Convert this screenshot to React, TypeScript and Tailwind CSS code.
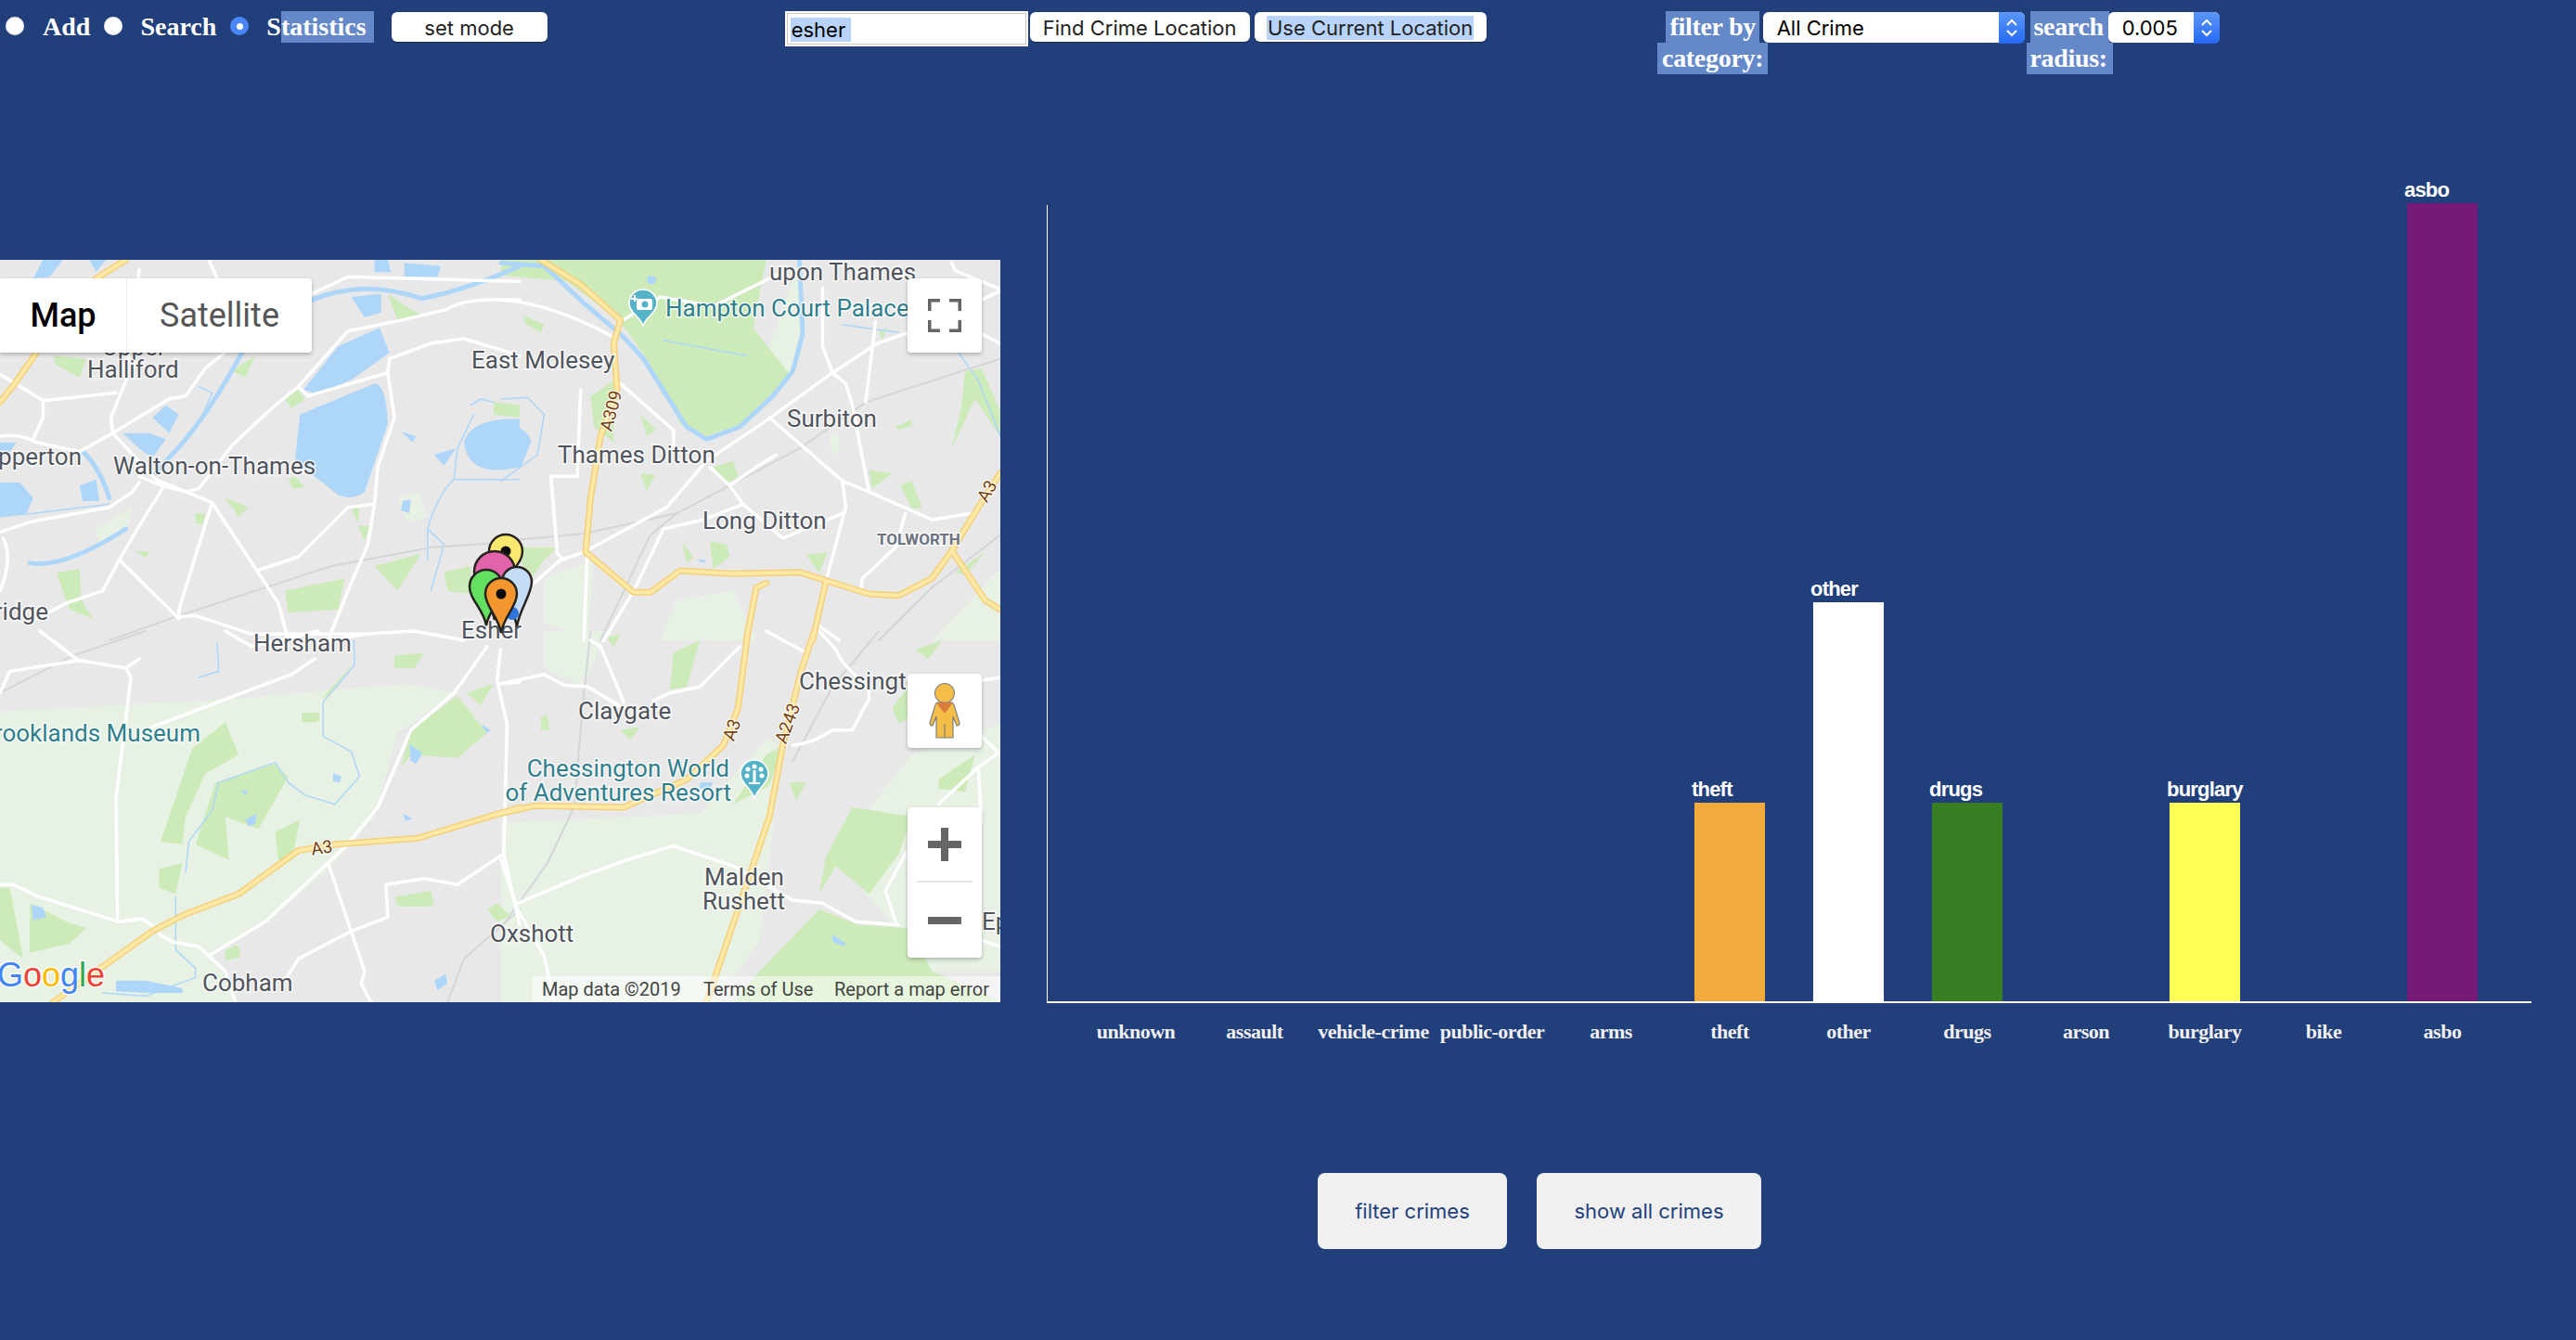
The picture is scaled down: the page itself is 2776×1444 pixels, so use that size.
import React from "react";

const Q: [number, number][] = [[0, -10], [540, -10], [0, 400], [540, 400]];

type Layer = [string[], string[], string[], string[]];

const lightGreen: Layer = [
  ["M290,900 L400,830 L380,900 L300,960Z", "M1200,800 L1260,780 L1290,860 L1230,880Z"],
  ["M130,1060 L280,1000 L260,1260 L130,1200Z", "M530,1130 L700,1100 L770,1260 L480,1260Z", "M1300,1260 L1506,1030 L1506,1260Z", "M990,590 L1020,590 L1020,660 L995,650Z", "M750,480 L830,250 L900,30 L905,300 L860,420Z"],
  ["M0,260 L360,240 L700,220 L900,200 L1230,170 L1370,200 L1200,330 L1130,600 L1000,760 L800,950 L640,1040 L720,1200 L0,1200Z"],
  ["M0,620 L600,590 L800,350 L850,370 L780,1000 L650,1200 L0,1200Z", "M1000,720 L1240,400 L1506,300 L1506,1100 L1300,1100Z", "M130,0 L320,0 L250,180 L130,120Z"],
];
const green: Layer = [
  ["M700,830 L680,800 L750,830 L720,860Z", "M860,1100 L1040,1060 L1020,1160 L870,1170Z", "M1130,1020 L1270,980 L1200,1100Z", "M170,1040 L240,1030 L245,1130 L280,1190 L210,1160Z", "M1340,1040 L1420,1020 L1420,1110 L1350,1100Z", "M700,390 L770,340 L740,410Z", "M860,480 L900,450 L920,480 L880,510Z", "M160,340 L260,350 L240,410 L170,370Z", "M590,850 L620,850 L610,885 L590,880Z", "M410,970 L450,975 L440,995Z", "M1170,140 L1240,190 L1280,210 L1200,225Z", "M1490,490 L1568,500 L1568,540 L1490,530Z", "M870,740 L890,730 L920,765 L885,770Z", "M1060,830 L1085,835 L1080,880Z", "M1080,890 L1115,890 L1100,940Z"],
  ["M0,30 L800,30 L760,250 L870,400 L730,560 L620,600 L540,560 L500,460 L440,350 L360,230 L200,100L0,80Z", "M270,470 L340,420 L340,620 L280,570Z", "M420,530 L470,580 L440,600Z", "M420,720 L465,725 L440,780Z", "M640,700 L700,680 L715,730 L680,755Z", "M1110,710 L1180,720 L1120,770Z", "M1205,760 L1240,745 L1270,830 L1240,835Z", "M1190,570 L1240,545 L1240,565 L1200,580Z", "M1400,390 L1450,380 L1506,520 L1506,600 L1430,480 L1360,640 L1390,500Z", "M545,940 L580,990 L560,1010Z", "M630,940 L680,950 L690,990 L640,1030Z", "M920,985 L985,975 L960,1040Z", "M1370,1040 L1460,975 L1400,1050Z", "M50,960 L170,960 L130,1000 L80,1080Z", "M70,210 L130,240 L120,265 L70,235Z", "M1140,260 L1165,250 L1150,290Z"],
  ["M580,380 L680,295 L720,400 L620,460 L560,600 L550,690 L485,680Z", "M650,490 L830,430 L870,470 L780,640 L680,600 L690,740 L590,690Z", "M830,650 L905,610 L880,740 L840,740Z", "M90,880 L200,940 L260,960 L210,1010 L90,1040Z", "M1240,320 L1380,210 L1470,330 L1380,410 L1240,400 L1210,440Z", "M970,220 L1070,100 L1000,200Z", "M480,770 L550,750 L530,850 L480,830Z", "M1190,860 L1300,840 L1310,890 L1200,890Z", "M1470,900 L1500,880 L1540,920 L1500,940Z", "M1190,80 L1280,70 L1250,120 L1190,120Z", "M1410,200 L1490,170 L1450,240Z", "M0,830 L30,830 L70,1060 L0,1000Z", "M910,265 L965,265 L960,295 L910,295Z", "M680,1030 L720,1015 L725,1055 L680,1065Z"],
  ["M960,850 L980,730 L1060,570 L1240,600 L1200,720 L1110,850 L1010,760Z", "M780,1100 L960,900 L1080,950 L1230,960 L1300,1100 L1506,1200 L700,1200Z", "M120,280 L140,270 L145,320 L120,320Z", "M360,320 L420,310 L390,350Z", "M870,490 L920,490 L890,550Z", "M700,560 L800,400 L850,370 L810,500Z", "M520,70 L600,30 L560,180 L510,190Z", "M320,20 L360,10 L340,55Z", "M1180,250 L1250,150 L1300,230 L1200,300Z", "M1320,480 L1430,400 L1400,520 L1320,510Z", "M1250,60 L1330,30 L1290,90Z"],
];
const water: Layer = [
  ["M905,530 L1130,430 Q1165,430 1170,560 L1100,780 Q1060,810 1020,790 L890,680Z", "M915,450 L1020,310 L1145,250 L1175,330 L1065,415 L960,465Z", "M1400,620 Q1420,540 1568,545 L1568,700 L1500,710 Q1410,710 1400,620Z", "M460,540 L500,500 L540,530 L510,590Z", "M370,590 L450,590 L500,610 L460,670 L420,640Z", "M0,750 L60,750 L100,800 L80,850 L0,860Z", "M240,760 L290,740 L300,810 L250,810Z", "M1310,660 L1375,640 L1340,695Z", "M130,30 L190,30 L150,85 L100,90Z", "M1060,150 L1150,140 L1150,200 L1100,215Z", "M1130,30 L1170,30 L1180,70 L1130,70Z", "M270,30 L320,30 L290,70Z", "M1220,40 L1330,50 L1320,85 L1220,85Z", "M0,620 L50,620 L30,650 L0,650Z", "M1210,585 L1255,600 L1245,620Z", "M1215,810 L1240,805 L1235,850 L1210,840Z"],
  ["M0,545 Q90,580 90,620 L60,700 L0,710Z", "M440,95 a14,14 0 1 0 28,0 a14,14 0 1 0 -28,0Z", "M590,1000 L620,1000 L610,1010Z"],
  ["M95,885 L130,895 L140,925 L100,935Z", "M1235,365 L1275,395 L1255,430 L1240,420Z", "M1005,460 L1030,470 L1025,490 L1005,485Z", "M740,610 L775,590 L770,625 L750,630Z", "M725,515 L748,515 L740,532Z", "M1215,590 L1245,605 L1225,615Z", "M1450,300 L1480,320 L1470,330Z", "M1310,1130 L1345,1110 L1350,1140 L1320,1160Z", "M350,1130 L440,1130 L550,1155 L550,1170 L440,1170 L350,1165Z"],
  ["M600,490 L640,490 L630,510 L600,510Z", "M1000,980 L1040,1010 L1035,1020 L1000,1005Z"],
];
const river: Layer = [
  ["M940,160 Q1100,90 1270,155 Q1400,130 1568,50", "M730,330 Q620,550 510,670 L470,720", "M250,650 Q300,700 330,800", "M90,1010 Q190,1030 380,900"],
  ["M0,40 L130,50 L250,170 L370,280 L430,350 L500,470 L560,570 L620,610 L720,570 L820,470 L880,390 L910,270 L900,30"],
  [],
  [],
];
const thinRiver: Layer = [
  ["M1290,1000 L1290,900 Q1320,790 1370,740 L1568,740", "M1420,500 L1450,480 L1490,490", "M1430,530 L1380,640 L1370,740", "M1290,900 L1340,950 L1300,1100", "M0,860 L100,850 L330,820", "M600,440 L640,460 L600,560"],
  ["M490,290 L740,340", "M0,480 L80,475 L130,530 L110,660 L0,745", "M1030,240 L1200,265", "M1380,330 L1440,420 L1506,600"],
  ["M1068,30 L1070,110 L975,230 L975,340 L1060,390 L1085,470 L1010,560 L920,530 L870,490 L830,425 L660,490 L640,580 L570,680 L560,780", "M530,860 L530,1030 L590,1090 L590,1120 L440,1180 L310,1170", "M600,150 L660,130 L655,40"],
  [],
];
const rail: Layer = [
  ["M330,1260 L540,1180 L1000,1020 L1300,960 L1568,940"],
  ["M0,940 L250,915 L530,850 L900,640 L1100,490 L1506,350", "M530,850 L450,920 L300,1260", "M1140,1260 L1300,1090 L1506,920"],
  ["M0,200 L220,80 L440,0", "M1350,1200 L1400,1060 L1568,900"],
  ["M270,0 L250,200 L220,570 L140,750 L0,960", "M1140,0 L1000,180 L880,420"],
];
const roads: Layer = [
  ["M0,400 L130,485 L350,460", "M130,485 L130,540 L100,610", "M420,60 L380,420 L335,540 L340,590 L470,740 L640,815 L840,1140 L870,1260", "M0,600 Q60,590 110,620 L240,650 L340,590 L510,480 L560,470 L620,380 L690,320", "M1568,160 Q1400,150 1350,190 Q1200,230 1050,260 L900,440 L820,510 L700,630 L600,770 L560,780 L490,760 L420,730", "M900,440 L930,470 L1170,395 L1175,350 L1300,300 L1400,285 L1568,340", "M1170,395 L1190,540 L1140,700 L1130,820 L1110,950 L1050,1100 L990,1260", "M640,815 L540,1160 L540,1190 L360,1000 L310,1100 L200,1140 L110,1190", "M0,910 L100,875 L330,830 L400,780 L420,750", "M775,1035 L900,990 L1050,830 L1130,820", "M0,1100 Q40,1000 10,930", "M360,1000 L420,890 L490,770", "M540,1185 L590,1180 L760,1240 L1100,1240", "M940,140 L1050,85 L1568,100", "M630,30 L655,90", "M1000,1260 L1100,1240 L1250,1230 L1400,1260"],
  ["M0,160 Q150,170 340,280", "M360,230 L480,150 L640,180 L830,80", "M250,975 L500,830 L620,680 L800,550 L1000,395 L1135,300 L1300,240 L1506,130", "M810,540 L1030,745 L1110,780 L1300,870 L1420,850", "M1030,745 L1040,830 L980,1070", "M1000,395 L970,310 L970,120", "M1000,395 L1040,430 L1060,500 L1110,780", "M1130,230 L1100,490", "M360,430 L520,580 L520,630", "M630,700 L690,760 L730,820 L610,870 L490,900 L400,1100 L310,1260", "M690,760 L770,700 L830,660", "M730,820 L850,930 L1030,850", "M150,730 L170,980 L190,1000", "M150,730 L230,730 L240,450", "M250,975 L180,1000 L50,1120", "M260,975 L250,1260", "M1220,850 L1190,960 L1090,1060 L1085,1100", "M1360,40 L1370,65 L1506,125", "M1450,270 L1506,300", "M955,1210 L1020,1260"],
  ["M0,200 L30,130 L240,95 L380,120 L420,90", "M380,120 L395,150 L350,540 L355,940", "M460,310 L880,140 L950,90", "M0,820 L40,820 L120,860 L360,940 L430,930 L470,960", "M480,980 L520,1005 L600,1020 L680,1100 L710,1200", "M630,1050 L800,940 L1040,700 L1140,570 L1240,320 L1370,200 L1470,50", "M990,750 L1100,1100 L1090,1140 L1120,1200", "M860,1130 L900,1060 L1060,970 L1170,925 L1165,820 L1280,800 L1380,820 L1520,720 L1530,300 L1500,160 L1510,60", "M1520,720 L1568,950", "M120,0 L230,90", "M1510,170 L1568,165", "M680,0 L760,50 L960,0"],
  ["M0,170 L130,140 L190,175 L260,180 L370,250", "M300,50 L370,230", "M270,30 L300,50", "M460,225 L510,200 L600,180 L720,50", "M880,370 Q950,360 1000,320 L1060,320 L1110,220 L1110,190 L1030,100 L1010,60 L960,0", "M1450,340 L1506,400", "M1320,560 L1440,440 L1506,390", "M1440,440 L1450,620", "M50,880 L250,790 L380,740 L520,695 L700,760 L880,870 L970,880 L1070,940 L1200,950", "M1160,840 L1190,940", "M1160,840 L1220,720", "M0,740 L50,900 L130,1050 L160,1200", "M1450,1000 L1506,1020", "M800,0 L920,70", "M1506,150 L1450,160 L1400,250"],
];
const highways: Layer = [
  ["M0,490 L45,430 L110,330", "M290,90 L380,30"],
  ["M120,30 L240,110 L360,225 L340,300 L350,450 L300,600 L270,800 L255,975 L400,1105 L450,1105 L540,1035 L700,1045 L900,1040 L1110,1110 L1200,1115 L1300,1060 L1360,970 L1440,830 L1506,720", "M1360,970 L1460,1130 L1506,1160", "M740,1260 L770,1090 L800,1075", "M940,1260 L980,1070"],
  ["M160,1200 L460,970 L560,915 L720,850 L900,710 L1010,690 L1260,670 L1568,570"],
  ["M745,0 L715,250 L670,370 L560,480 L370,570 L100,565 L0,590", "M945,0 L905,130 L850,370 L810,600 L620,1200"],
];

function fills(layer: Layer, color: string) {
  return layer.map((ds, i) => (
    <g key={i} transform={`translate(${Q[i][0]},${Q[i][1]}) scale(0.35714,0.33333)`} fill={color}>
      {ds.map((d, j) => <path key={j} d={d} />)}
    </g>
  ));
}
function lines(layer: Layer, color: string, w: number) {
  return layer.map((ds, i) => (
    <g key={i} transform={`translate(${Q[i][0]},${Q[i][1]}) scale(0.35714,0.33333)`} fill="none" stroke={color} strokeWidth={w} strokeLinejoin="round" strokeLinecap="round">
      {ds.map((d, j) => <path key={j} d={d} vectorEffect="non-scaling-stroke" />)}
    </g>
  ));
}

function Place({ x, y, t, anchor, teal }: { x: number; y: number; t: string; anchor?: "end"; teal?: boolean }) {
  return (
    <text x={x} y={y} textAnchor={anchor} fontSize={26} fill={teal ? "#2f7f8d" : "#50545c"} stroke="#ffffff" strokeOpacity={0.75} strokeWidth={3} className="font-['Roboto',sans-serif] [paint-order:stroke]">
      {t}
    </text>
  );
}
function RoadLabel({ x, y, r, t }: { x: number; y: number; r: number; t: string }) {
  return (
    <text transform={`translate(${x},${y}) rotate(${r})`} textAnchor="middle" dominantBaseline="middle" fontSize={19} fill="#75400c" stroke="#ffffff" strokeOpacity={0.8} strokeWidth={2.5} className="font-['Roboto',sans-serif] [paint-order:stroke]">
      {t}
    </text>
  );
}
function Pin({ cx, cy, r, tip, fill, dot }: { cx: number; cy: number; r: number; tip: number; fill: string; dot?: boolean }) {
  const d = `M${cx},${tip} C${cx - 3},${tip - 18} ${cx - r},${cy + r * 0.8} ${cx - r},${cy} A${r},${r} 0 1 1 ${cx + r},${cy} C${cx + r},${cy + r * 0.8} ${cx + 3},${tip - 18} ${cx},${tip}Z`;
  return (
    <g>
      <path d={d} fill={fill} stroke="#26231f" strokeWidth={2.5} />
      {dot && <circle cx={cx} cy={cy} r={5.5} fill="#0b0b0b" />}
    </g>
  );
}
function Poi({ cx, cy, tip }: { cx: number; cy: number; tip: number }) {
  return <path d={`M${cx},${tip} C${cx - 3},${tip - 10} ${cx - 15},${cy + 10} ${cx - 15},${cy} A15,15 0 1 1 ${cx + 15},${cy} C${cx + 15},${cy + 10} ${cx + 3},${tip - 10} ${cx},${tip}Z`} fill="#54b3c7" stroke="#ffffff" strokeWidth={1.5} />;
}

function MapView() {
  return (
    <div className="relative mt-[59px] h-[800px] w-[1078px] shrink-0 overflow-hidden bg-[#e8e8e8]">
      <svg width="1078" height="800" viewBox="0 0 1078 800" className="block">
        {fills(lightGreen, "#e7f2e5")}
        {fills(green, "#cdeab9")}
        {fills(water, "#aed6f8")}
        {lines(thinRiver, "#aed6f8", 1.5)}
        {lines(river, "#aed6f8", 5)}
        {lines(rail, "#d3d6d9", 2)}
        {lines(roads, "#ffffff", 3.5)}
        {lines(highways, "#f5cf7a", 7)}
        {lines(highways, "#fde9a6", 4)}

        <Place x={829} y={22} t="upon Thames" />
        <Place x={717} y={61} t="Hampton Court Palace" teal />
        <Place x={508} y={117} t="East Molesey" />
        <Place x={110} y={103} t="Upper" />
        <Place x={94} y={127} t="Halliford" />
        <Place x={88} y={221} t="Shepperton" anchor="end" />
        <Place x={122} y={231} t="Walton-on-Thames" />
        <Place x={52} y={388} t="Weybridge" anchor="end" />
        <Place x={848} y={180} t="Surbiton" />
        <Place x={601} y={219} t="Thames Ditton" />
        <Place x={757} y={290} t="Long Ditton" />
        <text x={945} y={307} fontSize={17} fontWeight={700} fill="#6b7480" stroke="#ffffff" strokeOpacity={0.75} strokeWidth={3} className="font-['Roboto',sans-serif] [paint-order:stroke]">TOLWORTH</text>
        <Place x={273} y={422} t="Hersham" />
        <Place x={216} y={519} t="Brooklands Museum" anchor="end" teal />
        <Place x={623} y={495} t="Claygate" />
        <Place x={861} y={463} t="Chessington" />
        <Place x={786} y={557} t="Chessington World" anchor="end" teal />
        <Place x={788} y={583} t="of Adventures Resort" anchor="end" teal />
        <Place x={759} y={674} t="Malden" />
        <Place x={757} y={700} t="Rushett" />
        <Place x={528} y={735} t="Oxshott" />
        <Place x={218} y={788} t="Cobham" />
        <Place x={1058} y={722} t="Epsom" />
        <Place x={497} y={408} t="Esher" />

        <RoadLabel x={660} y={163} r={-75} t="A309" />
        <RoadLabel x={1065} y={250} r={-60} t="A3" />
        <RoadLabel x={347} y={635} r={-8} t="A3" />
        <RoadLabel x={790} y={507} r={-70} t="A3" />
        <RoadLabel x={850} y={500} r={-70} t="A243" />

        <Poi cx={693} cy={47} tip={71} />
        <g fill="#ffffff">
          <rect x={686} y={42} width={17} height={12} rx={2} />
          <rect x={680} y={41} width={7} height={2} />
          <rect x={683} y={38} width={2} height={7} />
          <circle cx={695} cy={48} r={3.5} fill="#54b3c7" />
        </g>
        <Poi cx={813} cy={554} tip={580} />
        <g fill="#ffffff">
          <rect x={811.5} y={550} width={3} height={14} />
          <rect x={807} y={563} width={12} height={2} />
          <circle cx={813} cy={546} r={2.5} />
          <circle cx={806} cy={549} r={2.5} />
          <circle cx={820} cy={549} r={2.5} />
          <circle cx={805} cy={556} r={2.5} />
          <circle cx={821} cy={556} r={2.5} />
        </g>

        <Pin cx={545} cy={314} r={18} tip={352} fill="#fbe96f" dot />
        <Pin cx={533} cy={336} r={22} tip={388} fill="#e063ac" />
        <Pin cx={557} cy={347} r={16} tip={395} fill="#c4dcf6" />
        <Pin cx={524} cy={352} r={18} tip={394} fill="#63e05f" />
        <circle cx={552} cy={381} r={7} fill="#2f73d8" />
        <Pin cx={540} cy={360} r={17} tip={402} fill="#f4962f" dot />

        <text x={-3} y={783} fontSize={36} fontWeight={400} stroke="#ffffff" strokeOpacity={0.8} strokeWidth={3} className="font-['Liberation_Sans',sans-serif] [paint-order:stroke]">
          <tspan fill="#4285f4">G</tspan>
          <tspan fill="#ea4335">o</tspan>
          <tspan fill="#fbbc05">o</tspan>
          <tspan fill="#4285f4">g</tspan>
          <tspan fill="#34a853">l</tspan>
          <tspan fill="#ea4335">e</tspan>
        </text>
      </svg>

      <div className="absolute left-0 top-[20px] flex h-[80px] w-[336px] rounded-r-[4px] bg-white font-['Roboto',sans-serif] text-[36px] shadow-[0_2px_4px_rgba(0,0,0,0.25)]">
        <div className="flex w-[137px] items-center justify-center border-r border-[#eeeeee] font-medium text-black">Map</div>
        <div className="flex flex-1 items-center justify-center text-[#565656]">Satellite</div>
      </div>

      <div className="absolute left-[978px] top-[20px] flex h-[80px] w-[80px] items-center justify-center rounded-[4px] bg-white shadow-[0_2px_4px_rgba(0,0,0,0.25)]">
        <svg width="36" height="36" viewBox="0 0 36 36" fill="#666666">
          <path d="M0,0H13V3.5H3.5V13H0Z M23,0H36V13H32.5V3.5H23Z M0,23H3.5V32.5H13V36H0Z M32.5,23H36V36H23V32.5H32.5Z" />
        </svg>
      </div>

      <div className="absolute left-[978px] top-[446px] flex h-[80px] w-[80px] items-center justify-center rounded-[4px] bg-white shadow-[0_2px_4px_rgba(0,0,0,0.25)]">
        <svg width="36" height="60" viewBox="0 0 36 60">
          <circle cx="18" cy="11" r="10.5" fill="#f3bd47" stroke="#8a8a80" strokeWidth="1.2" />
          <path d="M10,21 L26,21 Q28,22 30,30 L34,43 Q34,46 31,46 L27,36 L27,59 L9,59 L9,36 L5,46 Q2,46 2,43 L6,30 Q8,22 10,21Z" fill="#f3bd47" stroke="#808080" strokeWidth="1.2" />
          <path d="M9,21 L27,21 L18,33Z" fill="#d97b3d" />
          <path d="M18,44 L18,59" stroke="#808080" strokeWidth="1.2" />
        </svg>
      </div>

      <div className="absolute left-[978px] top-[590px] flex h-[162px] w-[80px] flex-col items-center rounded-[4px] bg-white shadow-[0_2px_4px_rgba(0,0,0,0.25)]">
        <div className="flex h-[81px] w-[60px] items-center justify-center border-b-2 border-[#e6e6e6]">
          <svg width="36" height="36" viewBox="0 0 36 36" fill="#666666"><path d="M14,0H22V14H36V22H22V36H14V22H0V14H14Z" /></svg>
        </div>
        <div className="flex h-[81px] w-[60px] items-center justify-center">
          <svg width="36" height="8" viewBox="0 0 36 8" fill="#666666"><rect width="36" height="8" /></svg>
        </div>
      </div>

      <div className="absolute bottom-0 right-0 flex h-[28px] w-[504px] items-center bg-white/50 pl-[10px] font-['Roboto',sans-serif] text-[20px] text-[#444444]">
        <span className="w-[174px] whitespace-nowrap">Map data ©2019</span>
        <span className="w-[141px] whitespace-nowrap">Terms of Use</span>
        <span className="whitespace-nowrap">Report a map error</span>
      </div>
    </div>
  );
}

const cats = [
  { n: "unknown", h: 0, c: "" },
  { n: "assault", h: 0, c: "" },
  { n: "vehicle-crime", h: 0, c: "" },
  { n: "public-order", h: 0, c: "" },
  { n: "arms", h: 0, c: "" },
  { n: "theft", h: 214, c: "#f4a93c" },
  { n: "other", h: 430, c: "#ffffff" },
  { n: "drugs", h: 214, c: "#377e22" },
  { n: "arson", h: 0, c: "" },
  { n: "burglary", h: 214, c: "#fffe55" },
  { n: "bike", h: 0, c: "" },
  { n: "asbo", h: 860, c: "#751a76" },
];

function Chart() {
  return (
    <div className="ml-[50px] w-[1600px]">
      <div className="flex h-[860px] items-end border-b-2 border-l border-white pl-[31px]">
        {cats.map((c) => (
          <div key={c.n} className="flex w-[128px] flex-col items-center">
            {c.h > 0 && (
              <div className="relative w-[76px]">
                <span className="absolute bottom-full left-[-3px] mb-[1px] whitespace-nowrap font-['Liberation_Sans',sans-serif] text-[22px] font-bold leading-[26px] tracking-[-0.8px] text-white">{c.n}</span>
                {/* bar height comes from the data */}
                <div style={{ height: c.h, backgroundColor: c.c }} />
              </div>
            )}
          </div>
        ))}
      </div>
      <div className="flex pl-[32px] pt-[18px]">
        {cats.map((c) => (
          <div key={c.n} className="w-[128px] whitespace-nowrap text-center font-['Liberation_Serif',serif] text-[22px] font-bold leading-[26px] tracking-[-0.5px] text-[#f0f0f0]">
            {c.n}
          </div>
        ))}
      </div>
      <div className="ml-[292px] mt-[139px] flex gap-[32px] font-['Inter',sans-serif] text-[22px] text-[#21407c]">
        <button className="h-[82px] w-[204px] rounded-[8px] bg-[#f0f0f0]">filter crimes</button>
        <button className="h-[82px] w-[242px] rounded-[8px] bg-[#f0f0f0]">show all crimes</button>
      </div>
    </div>
  );
}

function Radio({ on }: { on?: boolean }) {
  return (
    <span className={`mt-[6px] flex h-[20px] w-[20px] shrink-0 items-center justify-center rounded-full ${on ? "bg-[#4a86f5]" : "bg-white shadow-[inset_0_0_2px_#b8b8b8]"}`}>
      {on && <span className="h-[7px] w-[7px] rounded-full bg-white" />}
    </span>
  );
}

function Arrows() {
  return (
    <span className="absolute right-0 top-0 flex h-[34px] w-[28px] items-center justify-center rounded-r-[6px] bg-gradient-to-b from-[#5b97f8] to-[#2468f2]">
      <svg width="14" height="22" viewBox="0 0 14 22" fill="none" stroke="#ffffff" strokeWidth="2">
        <path d="M2,8 L7,3 L12,8" />
        <path d="M2,14 L7,19 L12,14" />
      </svg>
    </span>
  );
}

const sel = "bg-[#6589c8]";

function TopBar() {
  const serifLabel = "font-['Liberation_Serif',serif] text-[28px] font-bold leading-[34px] text-white whitespace-nowrap";
  const btn = "mt-[1px] flex h-[32px] items-center justify-center rounded-[6px] bg-white font-['Inter',sans-serif] text-[22px] text-[#222222] shadow-[0_1px_1px_rgba(0,0,0,0.3)] whitespace-nowrap pt-[2px]";
  return (
    <div className="flex h-[221px] items-start pl-[6px] pt-[12px]">
      <Radio />
      <span className={`${serifLabel} ml-[20px]`}>Add</span>
      <span className="ml-[15px] flex"><Radio /></span>
      <span className={`${serifLabel} ml-[19px]`}>Search</span>
      <span className="ml-[15px] flex"><Radio on /></span>
      <span className={`${serifLabel} ml-[19px]`}>
        S<span className={`${sel} inline-block pr-[8px]`}>tatistics</span>
      </span>
      <button className={`${btn} ml-[19px] w-[168px]`}>set mode</button>

      <div className="ml-[256px] flex h-[38px] w-[262px] items-center border-2 border-white bg-white pl-[4px] pt-[1px] font-['Inter',sans-serif] text-[22px] text-black shadow-[inset_0_0_0_1px_#c8c8c8]">
        <span className="bg-[#b8d4fb] pl-[1px] pr-[6px] leading-[26px]">esher</span>
      </div>
      <button className={`${btn} ml-[2px] w-[237px]`}>Find Crime Location</button>
      <button className={`${btn} ml-[5px] w-[250px]`}>
        <span className="bg-[#b8d4fb] px-[1px] leading-[26px]">Use Current Location</span>
      </button>

      <div className={`${serifLabel} ml-[184px] -mr-[6px] flex w-[120px] flex-col items-center tracking-[-0.3px]`}>
        <span className={`${sel} w-[101px] text-center`}>filter by</span>
        <span className={`${sel} w-[119px] text-center`}>category:</span>
      </div>
      <div className="relative z-10 mt-[1px] flex h-[33px] w-[282px] items-center rounded-[6px] bg-white pl-[15px] pt-[1px] font-['Inter',sans-serif] text-[22px] text-black">
        All Crime
        <Arrows />
      </div>
      <div className={`${serifLabel} ml-[2px] -mr-[5px] flex w-[93px] flex-col items-center tracking-[-0.3px]`}>
        <span className={`${sel} w-[85px] pr-[2px] text-center`}>search</span>
        <span className={`${sel} w-[93px] pr-[2px] text-center`}>radius:</span>
      </div>
      <div className="relative z-10 mt-[1px] flex h-[33px] w-[120px] items-center rounded-[6px] bg-white pl-[15px] pt-[1px] font-['Inter',sans-serif] text-[22px] text-black">
        0.005
        <Arrows />
      </div>
    </div>
  );
}

export default function App() {
  return (
    <div className="h-[1444px] w-[2776px] overflow-hidden bg-[#213f7b]">
      <TopBar />
      <div className="flex items-start">
        <MapView />
        <Chart />
      </div>
    </div>
  );
}
